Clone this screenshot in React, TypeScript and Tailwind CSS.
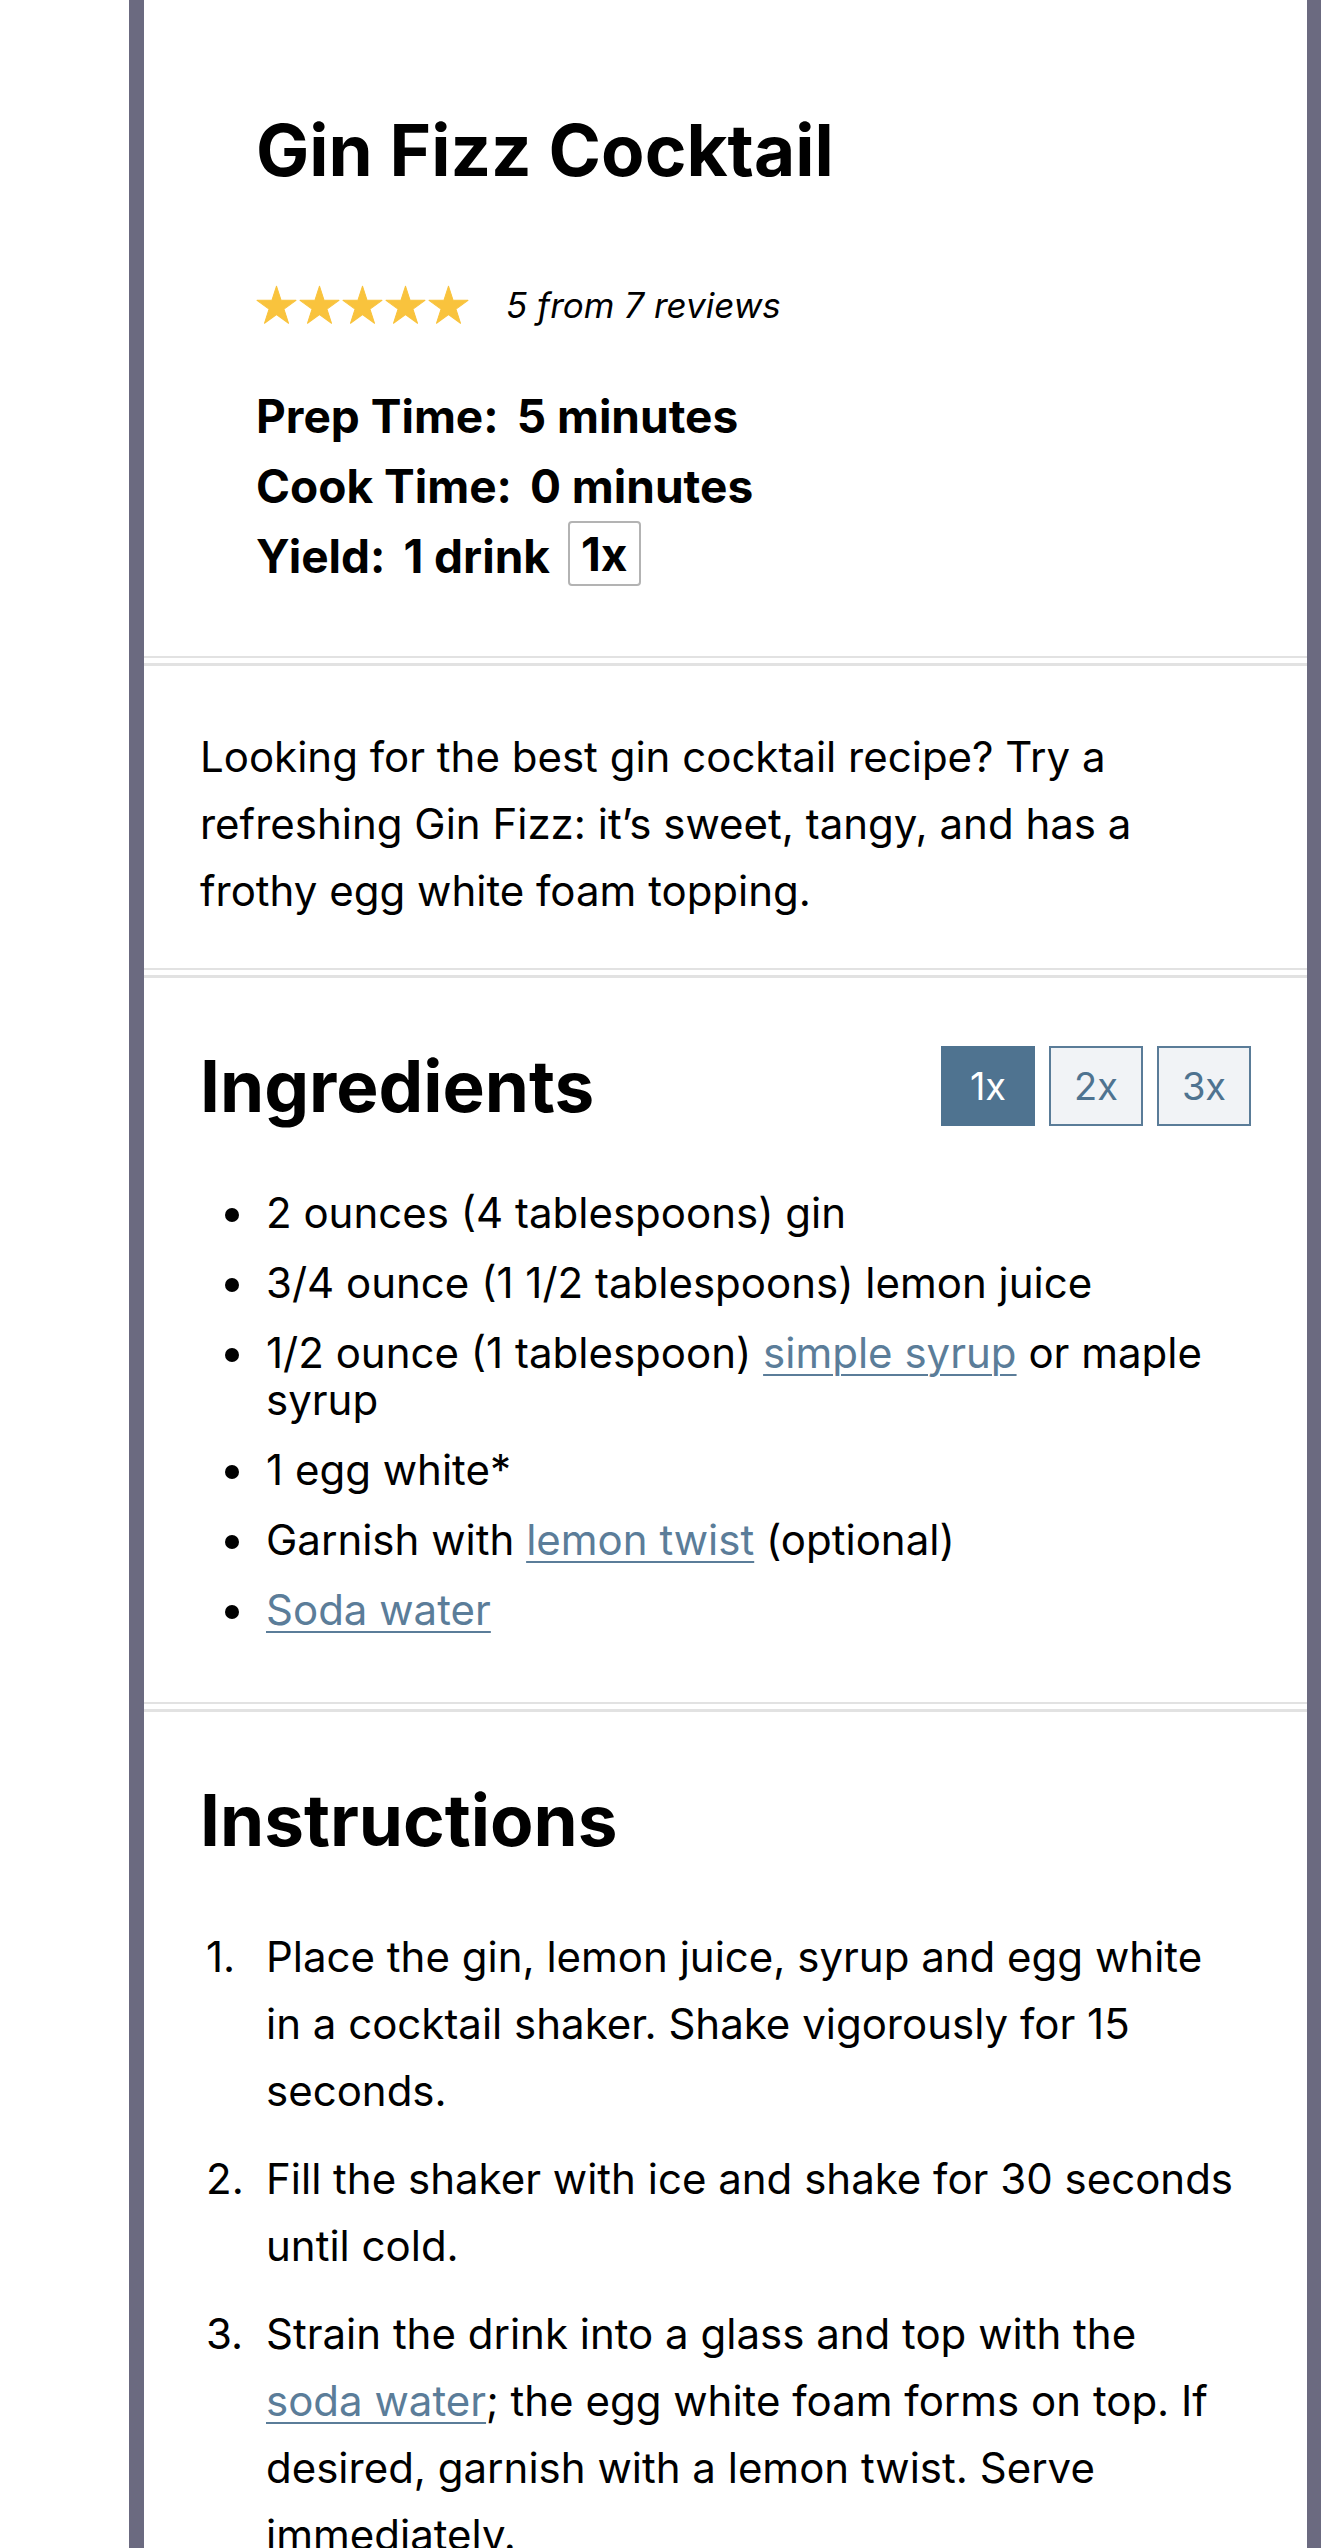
import React from "react";

const font = "font-['Inter','Noto_Sans',sans-serif]";

const Star = () => (
  <svg width="41" height="41" viewBox="0 0 24 24" className="shrink-0">
    <path
      d="M12 0.7 L14.69 8.99 L23.41 8.99 L16.36 14.12 L19.05 22.41 L12 17.28 L4.95 22.41 L7.64 14.12 L0.59 8.99 L9.31 8.99 Z"
      fill="#f9c33d"
      stroke="#f9c33d"
      strokeWidth="0.6"
      strokeLinejoin="round"
    />
  </svg>
);

const Divider = () => (
  <div className="h-[10px] border-t-2 border-b-[3px] border-[#e2e2e2]" />
);

const A = ({ children }: { children: React.ReactNode }) => (
  <a
    href="#"
    className="text-[#5b7d99] underline decoration-[2px] underline-offset-[6px]"
  >
    {children}
  </a>
);

const ingredients: React.ReactNode[] = [
  "2 ounces (4 tablespoons) gin",
  "3/4 ounce (1 1/2 tablespoons) lemon juice",
  <>
    1/2 ounce (1 tablespoon) <A>simple syrup</A> or maple syrup
  </>,
  "1 egg white*",
  <>
    Garnish with <A>lemon twist</A> (optional)
  </>,
  <A>Soda water</A>,
];

const steps: React.ReactNode[] = [
  "Place the gin, lemon juice, syrup and egg white in a cocktail shaker. Shake vigorously for 15 seconds.",
  "Fill the shaker with ice and shake for 30 seconds until cold.",
  <>
    Strain the drink into a glass and top with the <A>soda water</A>; the egg
    white foam forms on top. If desired, garnish with a lemon twist. Serve
    immediately.
  </>,
];

export default function App() {
  return (
    <div className={`${font} flex w-[1334px] min-h-[2548px] bg-white text-black`}>
      <div className="w-[129px] shrink-0" />
      <div className="w-[15px] shrink-0 bg-[#6b6a80]" />

      <main className="w-[1163px] shrink-0 flex flex-col">
        {/* header */}
        <section className="pl-[112px] pt-[110px] pb-[65px]">
          <h1 className="text-[71px] leading-[80px] font-bold">
            Gin Fizz Cocktail
          </h1>
          <div className="mt-[95px] flex items-center h-[40px]">
            <div className="flex gap-[2px]">
              <Star />
              <Star />
              <Star />
              <Star />
              <Star />
            </div>
            <span className="ml-[37px] text-[35px] italic">5 from 7 reviews</span>
          </div>
          <div className="mt-[56px] text-[46px] leading-[70px] font-bold">
            <div>
              <span className="mr-[18px]">Prep Time:</span>5 minutes
            </div>
            <div>
              <span className="mr-[18px]">Cook Time:</span>0 minutes
            </div>
            <div className="flex items-start">
              <span className="mr-[18px]">Yield:</span>1 drink
              <span className="ml-[18px] h-[65px] px-[11px] flex items-center border-2 border-[#b3b3b3] rounded-[4px]">
                1x
              </span>
            </div>
          </div>
        </section>
        <Divider />

        {/* description */}
        <section className="px-[56px] pt-[57px] pb-[44px]">
          <p className="text-[42px] leading-[67px]">
            Looking for the best gin cocktail recipe? Try a refreshing Gin Fizz:
            it’s sweet, tangy, and has a frothy egg white foam topping.
          </p>
        </section>
        <Divider />

        {/* ingredients */}
        <section className="px-[56px] pt-[68px] pb-[69px]">
          <div className="flex items-center justify-between h-[80px]">
            <h2 className="text-[71px] leading-[80px] font-bold">
              Ingredients
            </h2>
            <div className="flex gap-[14px] text-[38px]">
              <button className="w-[94px] h-[80px] bg-[#4f7390] border-2 border-[#4f7390] text-white">
                1x
              </button>
              <button className="w-[94px] h-[80px] bg-[#f1f3f6] border-2 border-[#5a7c98] text-[#4f7390]">
                2x
              </button>
              <button className="w-[94px] h-[80px] bg-[#f1f3f6] border-2 border-[#5a7c98] text-[#4f7390]">
                3x
              </button>
            </div>
          </div>
          <ul className="mt-[63px] flex flex-col gap-[23px] text-[42px] leading-[47px]">
            {ingredients.map((item, i) => (
              <li key={i} className="flex">
                <span className="w-[66px] shrink-0 h-[47px] flex items-center pl-[25px] pt-[4px]">
                  <span className="w-[14px] h-[14px] rounded-full bg-black" />
                </span>
                <span>{item}</span>
              </li>
            ))}
          </ul>
        </section>
        <Divider />

        {/* instructions */}
        <section className="pl-[56px] pr-[70px] pt-[68px]">
          <h2 className="text-[71px] leading-[80px] font-bold">
            Instructions
          </h2>
          <ol className="mt-[63px] flex flex-col gap-[21px] text-[42px] leading-[67px]">
            {steps.map((s, i) => (
              <li key={i} className="flex">
                <span className="w-[66px] shrink-0 pl-[6px]">{i + 1}.</span>
                <span>{s}</span>
              </li>
            ))}
          </ol>
        </section>
      </main>

      <div className="w-[14px] shrink-0 bg-[#6b6a80]" />
      <div className="flex-1" />
    </div>
  );
}
